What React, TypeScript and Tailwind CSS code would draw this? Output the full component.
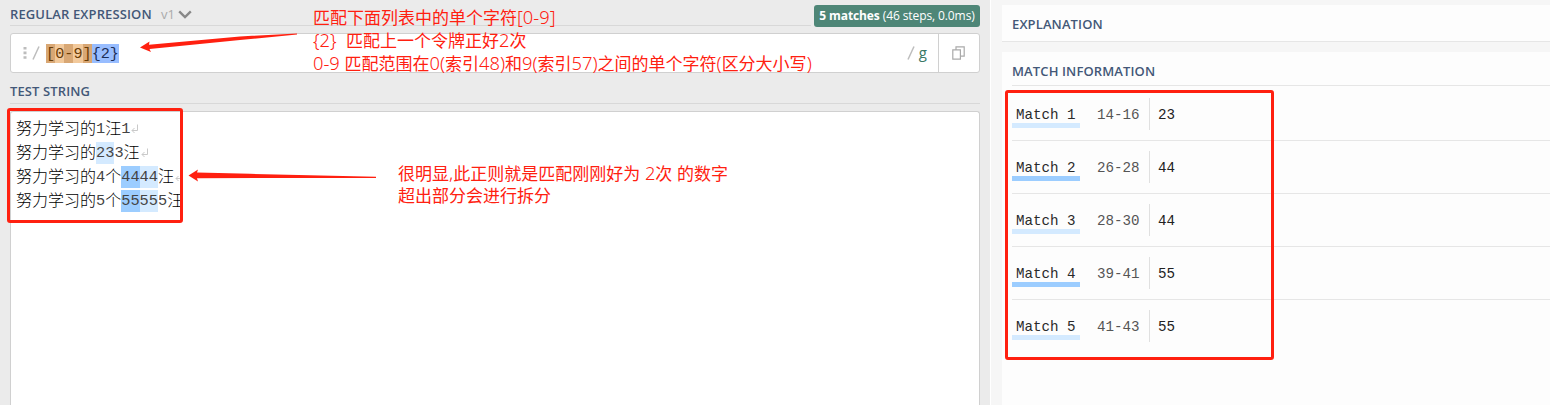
import React from "react";

type Run = { text: string; kind?: "num" | "light" | "dark" };

const lines: Run[][] = [
  [{ text: "努力学习的" }, { text: "1", kind: "num" }, { text: "汪" }, { text: "1", kind: "num" }],
  [{ text: "努力学习的" }, { text: "23", kind: "light" }, { text: "3", kind: "num" }, { text: "汪" }],
  [
    { text: "努力学习的" },
    { text: "4", kind: "num" },
    { text: "个" },
    { text: "44", kind: "dark" },
    { text: "44", kind: "light" },
    { text: "汪" },
  ],
  [
    { text: "努力学习的" },
    { text: "5", kind: "num" },
    { text: "个" },
    { text: "55", kind: "dark" },
    { text: "55", kind: "light" },
    { text: "5", kind: "num" },
    { text: "汪" },
  ],
];

const matches = [
  { id: 1, range: "14-16", value: "23" },
  { id: 2, range: "26-28", value: "44" },
  { id: 3, range: "28-30", value: "44" },
  { id: 4, range: "39-41", value: "55" },
  { id: 5, range: "41-43", value: "55" },
];

const runClass = {
  num: "",
  light: "bg-[#d4eaff]",
  dark: "bg-[#9ccdff]",
};

function Heading({ children }: { children: React.ReactNode }) {
  return <h2 className="text-[13px] leading-[18px] font-semibold tracking-[0.12px] text-[#435878]">{children}</h2>;
}

function ReturnMark() {
  return (
    <svg className="ml-[1px] h-[10px] w-[7px] shrink-0" viewBox="0 0 7 10" fill="none" stroke="#c9c9c9">
      <path d="M6.5 0.5V6.5H1M3.5 4L1 6.5L3.5 9" />
    </svg>
  );
}

function Editor() {
  return (
    <main className="flex h-full w-[990px] shrink-0 flex-col bg-[#ebebeb] pr-[10px] pl-[10px]">
      <header className="flex h-[26px] shrink-0">
        <div className="flex h-[26px] w-[801px] border-b border-[#d8d8d8] pt-[5px]">
          <div className="w-[151px] whitespace-nowrap">
            <Heading>REGULAR EXPRESSION</Heading>
          </div>
          <span className="text-[13px] leading-[18px] text-[#aaaaaa]">v1</span>
          <svg className="mt-[5px] ml-[3px] h-[9px] w-[14px]" viewBox="0 0 14 9" fill="none" stroke="#888" strokeWidth="2.4">
            <path d="M1.2 1.4L7 7L12.8 1.4" />
          </svg>
        </div>
        <div className="mt-[5px] ml-[3px] flex h-[22px] w-[166px] shrink-0 items-center justify-center rounded-[3px] bg-[#4e8677] text-[12px] tracking-[-0.1px] whitespace-pre text-white">
          <b className="font-bold">5 matches</b> (46 steps, 0.0ms)
        </div>
      </header>

      <section className="mt-[7px] flex h-[40px] shrink-0 rounded-[3px] border border-[#d0d0d0] bg-white">
        <div className="flex flex-1 items-center pl-[12px]">
          <svg className="h-[12px] w-[4px]" viewBox="0 0 4 12" fill="#bdbdbd">
            <path d="M0.5 0h3v2.6h-3zM0.5 4.6h3v2.6h-3zM0.5 9.2h3v2.6h-3z" />
          </svg>
          <svg className="ml-[5px] h-[14px] w-[8px]" viewBox="0 0 8 14" stroke="#bdbdbd" strokeWidth="1.5">
            <path d="M1 13.5L7 0.5" />
          </svg>
          <code className="ml-[6px] flex h-[19px] font-['Liberation_Mono',monospace] text-[15.2px] leading-[20px] text-[#6a3d06]">
            <span className="bg-[#d8a774]">[</span>
            <span className="bg-[#f2c99b]">0</span>
            <span className="bg-[#d8a774]">-</span>
            <span className="bg-[#f2c99b]">9</span>
            <span className="bg-[#d8a774]">]</span>
            <span className="bg-[#98bdff] text-[#1c2e57]">{"{2}"}</span>
          </code>
        </div>
        <svg className="mt-[12px] h-[14px] w-[8px]" viewBox="0 0 8 14" stroke="#bdbdbd" strokeWidth="1.5">
          <path d="M1 13.5L7 0.5" />
        </svg>
        <span className="mt-[8px] mr-[11px] ml-[4px] text-[15px] leading-[20px] text-[#3a7866]">g</span>
        <button className="flex w-[41px] items-center justify-center border-l border-[#d0d0d0] pr-[1px]">
          <svg className="h-[14px] w-[13px]" viewBox="0 0 13 14" fill="none" stroke="#aaa" strokeWidth="1.2">
            <path d="M0.8 3.8h7.6v9.4H0.8zM4 3.8V0.8h8.2v9.4H8.4" />
          </svg>
        </button>
      </section>

      <div className="mt-[9px] h-[22px] shrink-0 border-b border-[#d8d8d8]">
        <Heading>TEST STRING</Heading>
      </div>

      <section className="mt-[7px] flex-1 rounded-t-[3px] border border-b-0 border-[#d0d0d0] bg-white pt-[5px] pl-[5px] text-[#222]">
        {lines.map((line, row) => (
          <div key={row} className="flex h-[24px] items-center">
            {line.map((run, i) =>
              run.kind ? (
                <span
                  key={i}
                  className={`h-[22px] font-['Liberation_Mono',monospace] text-[15.3px] leading-[23px] text-[#444] ${runClass[run.kind]}`}
                >
                  {run.text}
                </span>
              ) : (
                <span
                  key={i}
                  className="h-[22px] font-['Noto_Sans_CJK_SC',sans-serif] text-[16px] leading-[18px] font-light text-black"
                >
                  {run.text}
                </span>
              ),
            )}
            {row < 3 && <ReturnMark />}
          </div>
        ))}
      </section>
    </main>
  );
}

function Results() {
  return (
    <aside className="flex h-full min-w-0 flex-1 flex-col border-l border-white bg-[#f6f6f6] pt-[5px] pl-[11px]">
      <section className="h-[37px] shrink-0 border-b border-[#e6e6e6] bg-[#fdfdfd] pt-[10px] pl-[10px]">
        <Heading>EXPLANATION</Heading>
      </section>
      <section className="mt-[10px] flex-1 bg-[#fdfdfd] pl-[10px]">
        <div className="h-[34px] border-b border-[#e6e6e6] pt-[10px]">
          <Heading>MATCH INFORMATION</Heading>
        </div>
        <div className="pt-[2px] font-['Liberation_Mono',monospace] text-[14.2px]">
          {matches.map((m) => (
            <div
              key={m.id}
              className={`flex h-[53px] items-center border-b ${m.id < 5 ? "border-[#e6e6e6]" : "border-transparent"}`}
            >
              <span
                className={`mt-[4px] h-[24px] w-[68px] border-b-[5px] pl-[4px] leading-[22px] text-[#2a2a2a] ${
                  m.id % 2 ? "border-[#d4eaff]" : "border-[#9ccdff]"
                }`}
              >
                Match {m.id}
              </span>
              <span className="w-[69px] pt-[2px] pl-[17px] leading-[20px] text-[#555]">{m.range}</span>
              <span className="flex h-[32px] items-center border-l border-[#e0e0e0] pt-[3px] pl-[8px] text-[#222]">{m.value}</span>
            </div>
          ))}
        </div>
      </section>
    </aside>
  );
}

function NoteLine({ text }: { text: string }) {
  return (
    <span className="flex h-[23px] items-baseline">
      {text.split(/([\x20-\x7e]+)/).map((part, i) => (
        <span key={i} className={i % 2 ? "text-[18.3px] font-light" : "text-[17px]"}>
          {part}
        </span>
      ))}
    </span>
  );
}

function Annotations() {
  return (
    <div className="pointer-events-none absolute inset-0 font-['Noto_Sans','Noto_Sans_CJK_SC',sans-serif] leading-[23px] whitespace-pre text-[#ff2010]">
      <div className="absolute top-[5px] left-[313px]">
        <NoteLine text="匹配下面列表中的单个字符[0-9]" />
        <NoteLine text="{2}  匹配上一个令牌正好2次" />
        <NoteLine text="0-9 匹配范围在0(索引48)和9(索引57)之间的单个字符(区分大小写)" />
      </div>
      <div className="absolute top-[161px] left-[398px]">
        <NoteLine text="很明显,此正则就是匹配刚刚好为 2次 的数字" />
        <NoteLine text="超出部分会进行拆分" />
      </div>
      <div className="absolute top-[108px] left-[7px] h-[115px] w-[176px] rounded-[3px] border-[3px] border-[#ff2010]" />
      <div className="absolute top-[90px] left-[1005px] h-[270px] w-[269px] rounded-[3px] border-[3px] border-[#ff2010]" />
      <svg className="absolute inset-0 h-[405px] w-[1550px]" viewBox="0 0 1550 405" fill="#ff2010">
        <path d="M140 47.5L149.5 41.5L149 44.8L240 36.4L297 33.5V34.5L240 40L149.5 49L151 52Z" />
        <path d="M188.5 175.5L198 169.5L197 172.5L250 173.8L376 176.7V178L285 178L197 178.3L198 181.5Z" />
      </svg>
    </div>
  );
}

export default function App() {
  return (
    <div className="relative flex h-[405px] w-[1550px] overflow-hidden font-['Open_Sans',sans-serif]">
      <Editor />
      <Results />
      <Annotations />
    </div>
  );
}
